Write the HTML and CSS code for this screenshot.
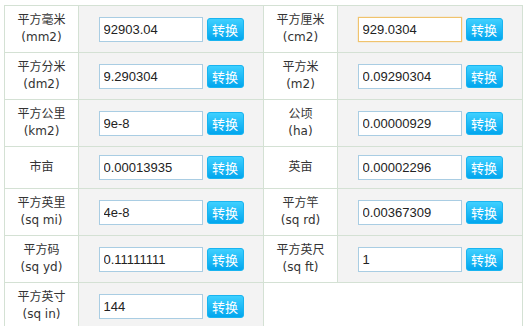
FILE: index.html
```html
<!DOCTYPE html>
<html>
<head>
    <meta charset="utf-8">
    <title>面积单位换算</title>
    <link rel="stylesheet" href="styles.css">
</head>
<body>
    <table class="conv-table">
        <tr>
            <td class="unit"><span>平方毫米</span><span>(mm2)</span></td>
            <td class="val"><input class="num" value="92903.04"><button class="go">转换</button></td>
            <td class="unit"><span>平方厘米</span><span>(cm2)</span></td>
            <td class="val"><input class="num focused" value="929.0304"><button class="go">转换</button></td>
        </tr>
        <tr>
            <td class="unit"><span>平方分米</span><span>(dm2)</span></td>
            <td class="val"><input class="num" value="9.290304"><button class="go">转换</button></td>
            <td class="unit"><span>平方米</span><span>(m2)</span></td>
            <td class="val"><input class="num" value="0.09290304"><button class="go">转换</button></td>
        </tr>
        <tr>
            <td class="unit"><span>平方公里</span><span>(km2)</span></td>
            <td class="val"><input class="num" value="9e-8"><button class="go">转换</button></td>
            <td class="unit"><span>公顷</span><span>(ha)</span></td>
            <td class="val"><input class="num" value="0.00000929"><button class="go">转换</button></td>
        </tr>
        <tr>
            <td class="unit"><span>市亩</span></td>
            <td class="val"><input class="num" value="0.00013935"><button class="go">转换</button></td>
            <td class="unit"><span>英亩</span></td>
            <td class="val"><input class="num" value="0.00002296"><button class="go">转换</button></td>
        </tr>
        <tr>
            <td class="unit"><span>平方英里</span><span>(sq mi)</span></td>
            <td class="val"><input class="num" value="4e-8"><button class="go">转换</button></td>
            <td class="unit"><span>平方竿</span><span>(sq rd)</span></td>
            <td class="val"><input class="num" value="0.00367309"><button class="go">转换</button></td>
        </tr>
        <tr>
            <td class="unit"><span>平方码</span><span>(sq yd)</span></td>
            <td class="val"><input class="num" value="0.11111111"><button class="go">转换</button></td>
            <td class="unit"><span>平方英尺</span><span>(sq ft)</span></td>
            <td class="val"><input class="num" value="1"><button class="go">转换</button></td>
        </tr>
        <tr>
            <td class="unit"><span>平方英寸</span><span>(sq in)</span></td>
            <td class="val"><input class="num" value="144"><button class="go">转换</button></td>
            <td class="blank" colspan="2"></td>
        </tr>
    </table>
</body>
</html>
```

FILE: styles.css
```css
body {
    margin: 5px 0 0 4px;
    background: #fff;
    font-family: "DejaVu Sans", "Noto Sans CJK SC", sans-serif;
    font-size: 12px;
    color: #333;
}

.conv-table {
    border-collapse: collapse;
    width: 519px;
    table-layout: fixed;
}

.conv-table td {
    border: 1px solid #d4e1d4;
}

.unit {
    width: 73px;
    padding: 6px 0;
    text-align: center;
    background: #fff;
}

.unit span {
    display: block;
    height: 17px;
    line-height: 17px;
}

.val {
    width: 184px;
    padding: 8px 0;
    text-align: center;
    background: #f3f3f3;
    font-size: 0;
    white-space: nowrap;
}

.blank {
    background: #fff;
}

.num {
    box-sizing: border-box;
    width: 104px;
    height: 25px;
    margin: 0 4px 0 0;
    padding: 0 4px;
    border: 1px solid #a9cde3;
    background: #fff;
    font-family: "Liberation Sans", Arial, sans-serif;
    font-size: 13px;
    color: #222;
    vertical-align: middle;
    outline: none;
}

.num.focused {
    border-color: #f0c36d;
    box-shadow: 0 0 1px #f0c36d;
}

.go {
    width: 37px;
    height: 23px;
    padding: 0;
    border: 1px solid #19b4f0;
    border-radius: 3px;
    background: linear-gradient(to bottom, #3fd0ff, #02a6ee);
    color: #fff;
    font-family: "Noto Sans CJK SC", sans-serif;
    font-size: 13px;
    line-height: 21px;
    vertical-align: middle;
    cursor: pointer;
}
```
